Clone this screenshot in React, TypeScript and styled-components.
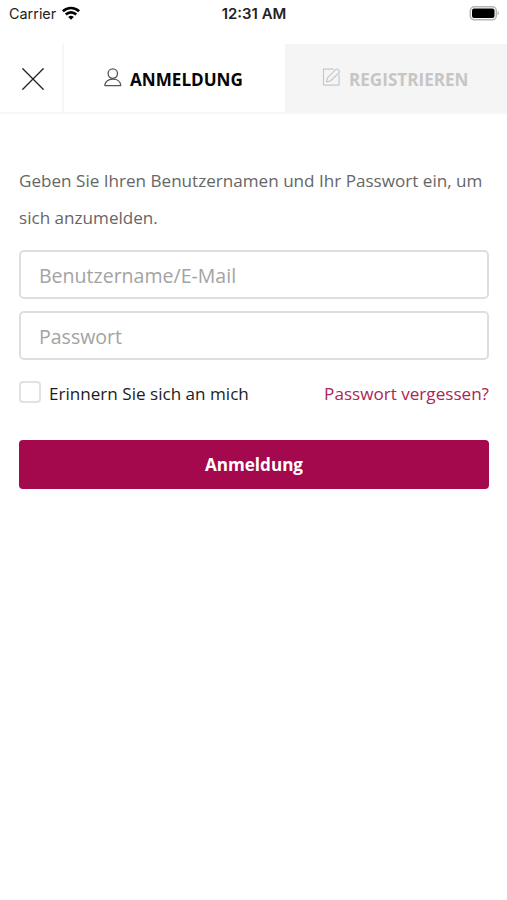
import React from "react";
import styled, { createGlobalStyle } from "styled-components";

const GlobalStyle = createGlobalStyle`
  * { box-sizing: border-box; }
  body { margin: 0; background: #fff; font-family: "Open Sans", sans-serif; color: #000; }
`;

const Screen = styled.div`
  width: 100%;
  height: 900px;
  background: #fff;
  overflow: hidden;
`;

const StatusBar = styled.header`
  height: 44px;
  padding: 5px 7px 0 9px;
  display: grid;
  grid-template-columns: 1fr auto 1fr;
  align-items: start;
  font-family: Inter, sans-serif;
  font-size: 14.4px;
  line-height: 18px;
  color: #222;
`;

const Carrier = styled.div`
  display: flex;
  gap: 6px;
  svg { margin-top: 1px; }
`;

const Time = styled.div`
  font-weight: 600;
  font-size: 14.9px;
  padding-right: 1px;
`;

const Battery = styled.div`
  display: flex;
  justify-content: flex-end;
  padding-top: 1px;
`;

const Tabs = styled.nav`
  display: grid;
  grid-template-columns: 64px 221px 1fr;
  height: 70px;
  border-bottom: 2px solid #f6f6f6;
`;

const CloseButton = styled.button`
  display: flex;
  align-items: center;
  justify-content: center;
  padding: 2px 0 0 3px;
  border: 0;
  border-right: 2px solid #f6f6f6;
  background: #fff;
`;

const Tab = styled.button<{ $active?: boolean }>`
  display: flex;
  align-items: center;
  padding: 2px 0 0 ${(p) => (p.$active ? 40 : 37)}px;
  gap: 8px;
  border: 0;
  background: ${(p) => (p.$active ? "#fff" : "#f5f5f5")};
  color: ${(p) => (p.$active ? "#050505" : "#c6c6c6")};
  font: 700 17.1px "Open Sans", sans-serif;
  white-space: nowrap;
  svg { flex: none; margin-bottom: 4px; }
`;

const Form = styled.form`
  padding: 49px 18px 0 19px;
`;

const Intro = styled.p`
  margin: 0 0 14px;
  font-size: 17.1px;
  line-height: 36.5px;
  color: #666;
`;

const Field = styled.input`
  display: block;
  width: 100%;
  height: 49px;
  margin-bottom: 12px;
  padding: 2px 18px 0;
  border: 2px solid #dedede;
  border-radius: 5px;
  outline: 0;
  background: #fff;
  font: 400 19.55px "Open Sans", sans-serif;
  &::placeholder { color: #a3a3a3; opacity: 1; }
`;

const Options = styled.div`
  display: flex;
  align-items: center;
  justify-content: space-between;
  height: 42px;
  font-size: 17.1px;
`;

const Remember = styled.label`
  display: flex;
  align-items: center;
  gap: 8px;
  color: #1c1c1c;
`;

const Checkbox = styled.input`
  appearance: none;
  width: 22px;
  height: 22px;
  margin: 0 0 3px;
  border: 2px solid #e2e2e2;
  border-radius: 4px;
  background: #fff;
`;

const ForgotLink = styled.a`
  color: #a92756;
  text-decoration: none;
`;

const Submit = styled.button`
  display: block;
  width: 100%;
  height: 49px;
  margin-top: 26px;
  border: 0;
  border-radius: 4px;
  background: #a4084d;
  color: #fff;
  font: 700 17.1px "Open Sans", sans-serif;
`;

const WifiIcon = () => (
  <svg width="18" height="15" viewBox="0 0 18 15" fill="none" stroke="#000" strokeWidth="2.6">
    <path d="M0.9 5.2a11.7 11.7 0 0 1 16.2 0" />
    <path d="M3.8 8.5a7.4 7.4 0 0 1 10.4 0" />
    <path d="M6.2 11.1a4.1 4.1 0 0 1 5.6 0L9 13.8z" fill="#000" stroke="none" />
  </svg>
);

const BatteryIcon = () => (
  <svg width="31" height="15" viewBox="0 0 31 15">
    <rect x="1.3" y="0.8" width="26" height="13" rx="4" fill="#fff" stroke="#b5b5b5" strokeWidth="1.5" />
    <rect x="3" y="2.4" width="22.5" height="9.7" rx="2" fill="#000" />
    <path d="M28.7 4.8q2.2 2.3 0 4.8z" fill="#999" />
  </svg>
);

const CloseIcon = () => (
  <svg width="22" height="22" viewBox="0 0 22 22" stroke="#222" strokeWidth="1.3" strokeLinecap="round">
    <path d="M.8.8l20.4 20.4M21.2.8L.8 21.2" />
  </svg>
);

const UserIcon = () => (
  <svg width="18" height="19" viewBox="0 0 18 19" fill="none" stroke="#555" strokeWidth="1.3" strokeLinejoin="round">
    <circle cx="8.8" cy="5.6" r="4.7" />
    <path d="M.9 17.6C.9 13.6 4 11.2 8.8 11.2s7.9 2.4 7.9 6.4z" />
  </svg>
);

const EditIcon = () => (
  <svg width="19" height="18" viewBox="0 0 19 18" fill="none" stroke="#c8c8c8" strokeWidth="1.2" strokeLinejoin="round">
    <path d="M11.8 1.2H1.5v15.9h15.6V6.4" />
    <path d="M4.4 13.9l1.1-4L13.7 1.6q1.1-1 2.2 0l1.1 1.1q.9 1.1 0 2.1l-8.3 8z" />
  </svg>
);

export default function App() {
  return (
    <>
      <GlobalStyle />
      <Screen>
        <StatusBar>
          <Carrier>Carrier <WifiIcon /></Carrier>
          <Time>12:31 AM</Time>
          <Battery><BatteryIcon /></Battery>
        </StatusBar>
        <Tabs>
          <CloseButton aria-label="Schließen"><CloseIcon /></CloseButton>
          <Tab $active><UserIcon />ANMELDUNG</Tab>
          <Tab><EditIcon />REGISTRIEREN</Tab>
        </Tabs>
        <Form onSubmit={(e) => e.preventDefault()}>
          <Intro>Geben Sie Ihren Benutzernamen und Ihr Passwort ein, um sich anzumelden.</Intro>
          <Field placeholder="Benutzername/E-Mail" />
          <Field type="password" placeholder="Passwort" />
          <Options>
            <Remember><Checkbox type="checkbox" />Erinnern Sie sich an mich</Remember>
            <ForgotLink href="#">Passwort vergessen?</ForgotLink>
          </Options>
          <Submit>Anmeldung</Submit>
        </Form>
      </Screen>
    </>
  );
}
